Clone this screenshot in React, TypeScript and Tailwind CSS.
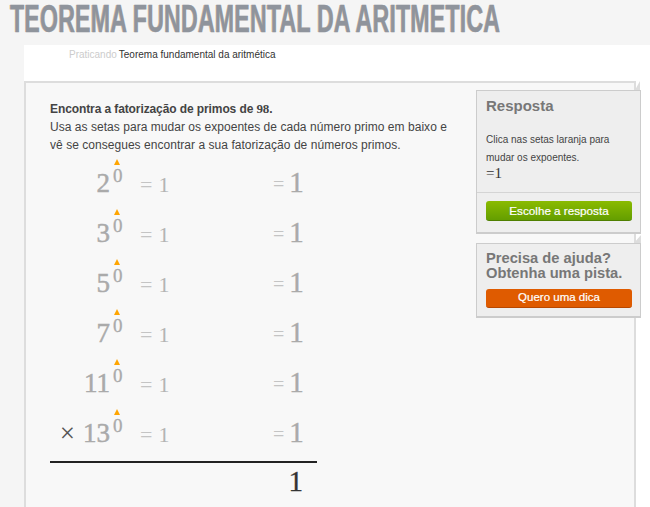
const sans = "font-['Liberation_Sans',Arial,sans-serif]";

function Row({ base, times }: { base: string; times?: boolean }) {
  return (
    <div className="flex h-[50px] items-baseline">
      <div className="flex w-[60px] shrink-0 items-baseline justify-end text-[27px] leading-none text-[#aaaaaa] [-webkit-text-stroke:0.5px_#aaaaaa]">
        {times && <span className="mr-[8px] text-[#555555] [-webkit-text-stroke:0]">×</span>}
        <span>{base}</span>
      </div>
      <div className="relative w-[30px] shrink-0">
        <span className="relative top-[-10px] ml-[3px] text-[19px] leading-none text-[#aaaaaa] [-webkit-text-stroke:0.3px_#aaaaaa]">0</span>
        <span className="absolute left-[4px] top-[-16px] h-0 w-0 border-x-[3.5px] border-b-[6px] border-x-transparent border-b-[#ffa500]" />
      </div>
      <div className="w-[133px] shrink-0 text-[22px] leading-none text-[#c4c4c4]">
        <span className="mr-[6px]">=</span>
        <span className="text-[#b4b4b4]">1</span>
      </div>
      <div className="text-[29px] leading-none text-[#aaaaaa] [-webkit-text-stroke:0.4px_#aaaaaa]">
        <span className="relative top-[-1px] mr-[5px] text-[20px] text-[#c4c4c4] [-webkit-text-stroke:0]">=</span>
        <span>1</span>
      </div>
    </div>
  );
}

export default function App() {
  return (
    <div className={`h-[507px] w-[650px] overflow-hidden bg-[#f5f5f5] ${sans}`}>
      <div className="h-[45px] pl-[10px]">
        <h1 className="w-[800px] origin-left scale-x-[0.612] whitespace-nowrap text-[38px] font-bold leading-[38px] tracking-[0.2px] text-[#8f949c] [-webkit-text-stroke:0.4px_#8f949c] [text-shadow:-1px_0_0_#d9c2a8]">
          TEOREMA FUNDAMENTAL DA ARITMETICA
        </h1>
      </div>
      <div className="ml-[24px] h-[462px] bg-white">
        <div className="flex h-[36px] items-start pl-[45px] pt-[3px] text-[10px] leading-[13px]">
          <span className="mr-[3px] text-[#cccccc]">Praticando</span>
          <span className="ml-[-1px] text-[#333333]">Teorema fundamental da aritmética</span>
        </div>
        <div className="relative h-[430px] w-[612px] border-x-2 border-t-2 border-x-[#dddddd] border-t-[#dddddd] bg-[#f8f8f8] pl-[24px] pt-[17px]">
          <span className="absolute right-[-6px] top-[-2px] h-0 w-0 border-b-[9px] border-l-[5px] border-b-[#dddddd] border-l-transparent" />
          <p className="text-[12px] leading-[18px] tracking-[0.04px] text-[#444444]">
            <span className="font-bold tracking-[-0.1px]">
              Encontra a fatorização de primos de <span className="font-['Liberation_Serif',serif] text-[13px]">98</span>.
            </span>
            <br />
            Usa as setas para mudar os expoentes de cada número primo em baixo e
            <br />
            vê se consegues encontrar a sua fatorização de números primos.
          </p>
          <div className="mt-[14px] w-[267px] font-['Liberation_Serif',serif]">
            <Row base="2" />
            <Row base="3" />
            <Row base="5" />
            <Row base="7" />
            <Row base="11" />
            <Row base="13" times />
            <div className="mt-[-7px] h-[2px] bg-[#222222]" />
            <div className="mr-[14px] mt-[4px] text-right text-[29px] leading-none text-[#333333] [-webkit-text-stroke:0.3px_#333333]">1</div>
          </div>
          <aside className="absolute left-[450px] top-[7px] w-[165px]">
            <div className="h-[144px] border border-b-2 border-[#cccccc] bg-[#eeeeee]">
              <div className="h-[102px] border-b border-[#d4d4d4] px-[9px] pt-[5px]">
                <h2 className="text-[15px] font-bold leading-[20px] text-[#777777]">Resposta</h2>
                <p className="mt-[15px] text-[10px] leading-[18px] text-[#444444]">
                  Clica nas setas laranja para
                  <br />
                  mudar os expoentes.
                </p>
                <p className="mt-[-2px] font-['Liberation_Serif',serif] text-[15px] leading-[16px] text-[#333333]">=1</p>
              </div>
              <button className="mx-[9px] mt-[8px] flex h-[20px] w-[146px] items-center justify-center rounded-[3px] border-b border-[#4f7f00] bg-gradient-to-b from-[#8abb00] to-[#649e00] text-[11.7px] text-white [-webkit-text-stroke:0.2px_#ffffff]">
                Escolhe a resposta
              </button>
            </div>
            <div className="relative mt-[9px] h-[75px] border border-b-2 border-[#cccccc] bg-[#eeeeee] px-[9px] pt-[7px]">
              <span className="absolute right-[-1px] top-[-9px] h-0 w-0 border-b-[8px] border-l-[7px] border-b-[#dddddd] border-l-transparent" />
              <h2 className="whitespace-nowrap text-[14.7px] font-bold leading-[15px] text-[#777777]">
                Precisa de ajuda?
                <br />
                Obtenha uma pista.
              </h2>
              <button className="mt-[8px] flex h-[19px] w-[146px] items-center justify-center rounded-[3px] border-b border-[#b84800] bg-[#df5b00] text-[11.5px] text-white [-webkit-text-stroke:0.2px_#ffffff]">
                Quero uma dica
              </button>
            </div>
          </aside>
        </div>
      </div>
    </div>
  );
}
